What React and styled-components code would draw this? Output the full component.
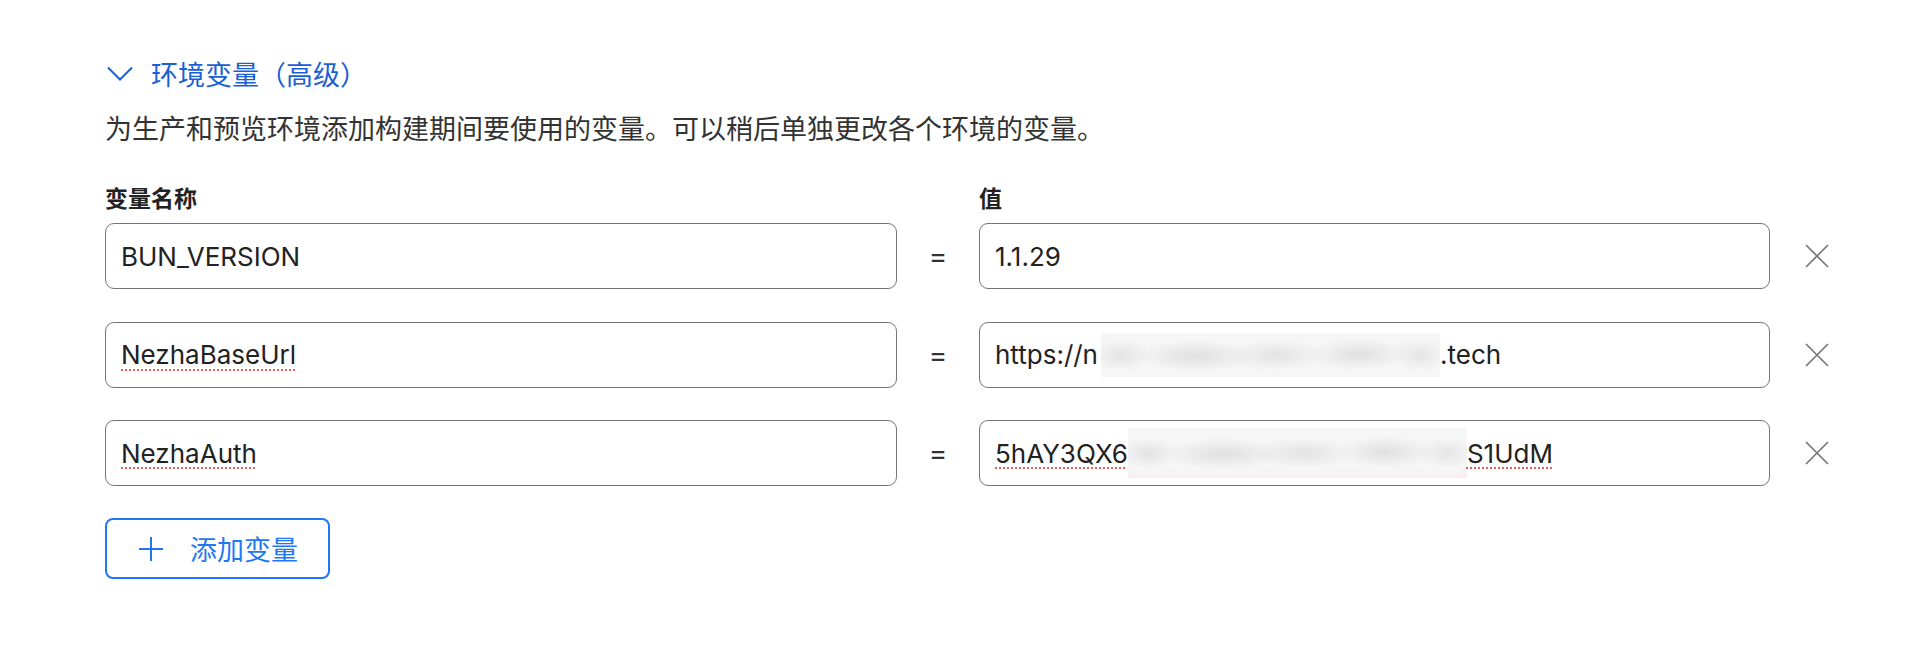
import React from "react";
import styled, { createGlobalStyle } from "styled-components";

const Global = createGlobalStyle`
  html, body { margin: 0; padding: 0; background: #ffffff; }
  body { font-family: Inter, "Noto Sans CJK SC", sans-serif; color: #222; }
`;

const Page = styled.div`
  padding: 53px 0 0 105px;
  width: 1920px;
  box-sizing: border-box;
`;

const Toggle = styled.div`
  display: flex;
  align-items: center;
  gap: 18px;
  height: 40px;
  color: #1a5fd4;
  font-family: "Noto Sans CJK SC", sans-serif;
  font-size: 27px;
  svg { margin-left: 2px; }
`;

const Description = styled.p`
  margin: 15px 0 0;
  font-family: "Noto Sans CJK SC", sans-serif;
  font-size: 27px;
  line-height: 40px;
  color: #333;
`;

const Columns = styled.div`
  display: grid;
  grid-template-columns: 792px 82px 791px 94px;
  align-items: center;
`;

const LabelRow = styled(Columns)`
  margin-top: 34px;
  margin-bottom: 11px;
`;

const Label = styled.div`
  grid-column: ${(p) => p.$col};
  font-family: "Noto Sans CJK SC", sans-serif;
  font-weight: 700;
  font-size: 23px;
  line-height: 30px;
  color: #222;
`;

const Rows = styled.div`
  display: flex;
  flex-direction: column;
  gap: 32.5px;
`;

const Field = styled.div`
  height: 66px;
  box-sizing: border-box;
  border: 1.5px solid #767676;
  border-radius: 9px;
  padding: 0 15px;
  display: flex;
  align-items: center;
  font-size: 26px;
  color: #222;
  white-space: nowrap;
  overflow: hidden;
`;

const Misspelled = styled.span`
  text-decoration: underline dotted #ef5a52;
  text-decoration-thickness: 2px;
  text-underline-offset: 5px;
`;

const Blur = styled.span`
  display: inline-block;
  flex: none;
  width: ${(p) => p.$w}px;
  height: ${(p) => p.$h}px;
  margin-left: ${(p) => p.$ml || 0}px;
  background:
    radial-gradient(ellipse 30px 16px at 6% 50%, rgba(160,160,160,0.22), transparent),
    radial-gradient(ellipse 60px 16px at 28% 52%, rgba(160,160,160,0.26), transparent),
    radial-gradient(ellipse 50px 16px at 52% 50%, rgba(160,160,160,0.22), transparent),
    radial-gradient(ellipse 50px 16px at 76% 48%, rgba(160,160,160,0.26), transparent),
    radial-gradient(ellipse 28px 16px at 94% 50%, rgba(160,160,160,0.2), transparent),
    ${(p) => (p.$pink ? "linear-gradient(to bottom, #f6f6f6 80%, #f9efef)" : "#f6f6f6")};
`;

const Equals = styled.div`
  text-align: center;
  font-size: 28px;
  color: #333;
`;

const RemoveButton = styled.button`
  justify-self: center;
  background: none;
  border: none;
  padding: 0;
  width: 26px;
  height: 26px;
  display: flex;
  align-items: center;
  justify-content: center;
  cursor: pointer;
`;

const AddButton = styled.button`
  margin-top: 32px;
  height: 61px;
  width: 225px;
  box-sizing: border-box;
  border: 2px solid #1f77f5;
  border-radius: 8px;
  background: #fff;
  color: #1f77f5;
  display: flex;
  align-items: center;
  gap: 27px;
  padding: 0 0 0 32px;
  font-family: "Noto Sans CJK SC", sans-serif;
  font-size: 27px;
  cursor: pointer;
`;

const Chevron = () => (
  <svg width="26" height="15" viewBox="0 0 26 15" fill="none">
    <polyline points="1,1.5 13,13.5 25,1.5" stroke="#1a5fd4" strokeWidth="2" />
  </svg>
);

const XIcon = () => (
  <svg width="24" height="24" viewBox="0 0 24 24" fill="none">
    <path d="M1 1 L23 23 M23 1 L1 23" stroke="#777" strokeWidth="1.7" />
  </svg>
);

const PlusIcon = () => (
  <svg width="24" height="24" viewBox="0 0 24 24" fill="none">
    <path d="M12 0 V24 M0 12 H24" stroke="#1f77f5" strokeWidth="2" />
  </svg>
);

const rows = [
  {
    name: <span>BUN_VERSION</span>,
    value: <span>1.1.29</span>,
  },
  {
    name: <Misspelled>NezhaBaseUrl</Misspelled>,
    value: (
      <>
        <span>https://n</span>
        <Blur $w={339} $h={44} $ml={3} />
        <span>.tech</span>
      </>
    ),
  },
  {
    name: <Misspelled>NezhaAuth</Misspelled>,
    value: (
      <>
        <Misspelled>5hAY3QX6</Misspelled>
        <Blur $w={339} $h={50} $pink />
        <Misspelled>S1UdM</Misspelled>
      </>
    ),
  },
];

export default function App() {
  return (
    <Page>
      <Global />
      <Toggle>
        <Chevron />
        <span>环境变量（高级）</span>
      </Toggle>
      <Description>
        为生产和预览环境添加构建期间要使用的变量。可以稍后单独更改各个环境的变量。
      </Description>
      <LabelRow>
        <Label $col={1}>变量名称</Label>
        <Label $col={3}>值</Label>
      </LabelRow>
      <Rows>
        {rows.map((r, i) => (
          <Columns key={i}>
            <Field>{r.name}</Field>
            <Equals>=</Equals>
            <Field>{r.value}</Field>
            <RemoveButton aria-label="删除">
              <XIcon />
            </RemoveButton>
          </Columns>
        ))}
      </Rows>
      <AddButton>
        <PlusIcon />
        <span>添加变量</span>
      </AddButton>
    </Page>
  );
}
